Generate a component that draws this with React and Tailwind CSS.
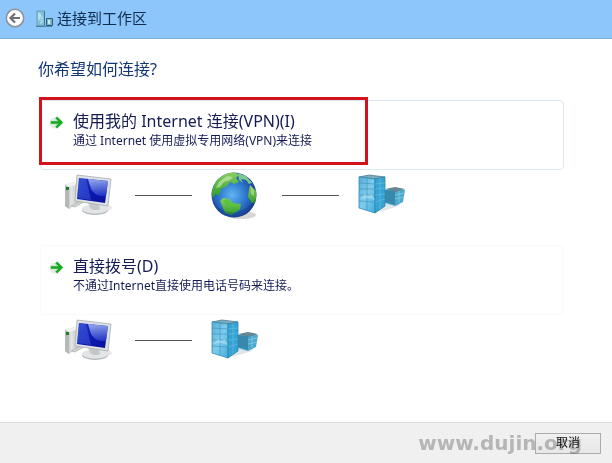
import { useState } from 'react';

function BackIcon() {
  return (
    <svg width="20" height="20" viewBox="0 0 20 20">
      <circle cx="10" cy="10" r="8.7" fill="#fdfdfd" stroke="#8d8f92" strokeWidth="1.5" />
      <path d="M15 10H6M10 5.5L5.5 10l4.5 4.5" fill="none" stroke="#6f6f6f" strokeWidth="2.2" />
    </svg>
  );
}

function WorkplaceIcon() {
  return (
    <svg width="17" height="17" viewBox="0 0 17 17">
      <path d="M1 1h7.500v15H1z" fill="#7fbfd8" stroke="#5b97ae" strokeWidth=".8" />
      <path d="M2 2l3 2v4L2 11z" fill="#b5e3ea" />
      <path d="M5 7l2-2v8l-3 1z" fill="#a3d5e2" />
      <path d="M8.500 1v14" stroke="#3f7690" />
      <path d="M10.500 8.500h6v7h-6z" fill="#7db6c9" stroke="#2f5f74" strokeWidth="1" />
      <path d="M12 10h2v4h-2z" fill="#c9edf2" />
      <path d="M0 16.300h16" stroke="#35637e" strokeWidth=".8" />
    </svg>
  );
}

function ArrowIcon() {
  return (
    <svg width="15" height="15" viewBox="0 0 15 15" className="shrink-0">
      <circle cx="6" cy="8" r="5.5" fill="#e6ebe6" />
      <path d="M1 7.5h11M7 2.5l5 5-5 5" fill="none" stroke="#b4e3b4" strokeWidth="3.6" />
      <path d="M2 7.5h10.5M7.3 2.500l5 5-5 5" fill="none" stroke="#14a824" strokeWidth="2.4" />
    </svg>
  );
}

function ComputerIcon() {
  return (
    <svg width="48" height="44" viewBox="0 0 48 44" className="shrink-0">
      <defs>
        <linearGradient id="screen" x1="0" y1="0" x2="1" y2="1">
          <stop offset="0" stopColor="#2438c8" />
          <stop offset=".5" stopColor="#0d1ab4" />
          <stop offset="1" stopColor="#0a1196" />
        </linearGradient>
        <linearGradient id="glare" x1=".4" y1="0" x2=".5" y2="1">
          <stop offset="0" stopColor="#a9bdf2" />
          <stop offset="1" stopColor="#2238cc" />
        </linearGradient>
        <linearGradient id="metal" x1="0" y1="0" x2="1" y2="0">
          <stop offset="0" stopColor="#9da2a0" />
          <stop offset=".45" stopColor="#e4e6e5" />
          <stop offset="1" stopColor="#bcc0bf" />
        </linearGradient>
      </defs>
      <ellipse cx="36" cy="35" rx="12" ry="4" fill="#e8e8e8" />
      <path d="M1 12l8-3 6 2v19L5 36l-4-3z" fill="url(#metal)" />
      <path d="M1 12l4 2v22l-4-3z" fill="#b4b8b7" />
      <path d="M1 12l8-3 6 2-10 3z" fill="#f1f3f2" />
      <path d="M2 14h3v3H2z" fill="#247a2b" />
      <path d="M7 33l10-5 3 1-9 5z" fill="#d0d3d2" stroke="#a6aaa9" strokeWidth=".6" />
      <ellipse cx="31" cy="37" rx="13" ry="5" fill="#b2b6b8" />
      <ellipse cx="31" cy="36" rx="13" ry="4.700" fill="#e2e5e6" />
      <path d="M24 29l11 2 1 5c-3 2-8 1-10-1z" fill="#c4c8ca" />
      <path d="M13 2l34 4-3 27-33-5z" fill="#dde1e4" stroke="#a7adb1" strokeWidth=".8" />
      <path d="M15 5l29 3-3 22-28-4z" fill="url(#screen)" />
      <path d="M15 5l7 1 5 21-14-2z" fill="#4e70e2" opacity=".4" />
      <path d="M24 6l20 2-2 15c-7 1-12-2-15-7z" fill="url(#glare)" opacity=".85" />
    </svg>
  );
}

function GlobeIcon() {
  return (
    <svg width="48" height="50" viewBox="0 0 48 50" className="shrink-0">
      <defs>
        <radialGradient id="ocean" cx=".46" cy=".5" r=".57">
          <stop offset="0" stopColor="#62b4f0" />
          <stop offset=".5" stopColor="#2f7bd0" />
          <stop offset="1" stopColor="#17388f" />
        </radialGradient>
        <linearGradient id="land" x1="0" y1="0" x2="0" y2="1">
          <stop offset="0" stopColor="#8fd066" />
          <stop offset="1" stopColor="#2c9b28" />
        </linearGradient>
        <clipPath id="globe"><circle cx="23" cy="25" r="22.5" /></clipPath>
      </defs>
      <ellipse cx="30" cy="45" rx="15" ry="4" fill="#d8d5d2" />
      <circle cx="23" cy="25" r="22.5" fill="url(#ocean)" />
      <g clipPath="url(#globe)">
        <path d="M0 24l5-14 9-8 9-1 5 4-3 3 3 4-5 2-4-2-3 4-6 3-2 6-4-1-1 4z" fill="url(#land)" />
        <path d="M8 12l8-6 6 1-3 3-6 2-4 5-4 1z" fill="#dcf2c0" opacity=".55" />
        <path d="M27 3l8 3 6 7-3 1-3-4-5-1 2 4-4-3z" fill="#7cc88a" />
        <path d="M39 15l6 6v13l-4-1-4-6 1-7z" fill="url(#land)" />
        <path d="M40 17l3 3v6l-3-2z" fill="#b6e58f" opacity=".6" />
        <path d="M9 31l3-3 6 1 4 4 8 1-1 5-5 4-4 2-6-2-2-5z" fill="url(#land)" />
        <path d="M12 30l5-1 5 5 5 1-5 2-7-2z" fill="#58c43d" />
        <path d="M1 28c5 15 29 23 44 0-1 13-12 20-23 20S2 40 1 28z" fill="#0c2b74" opacity=".25" />
      </g>
    </svg>
  );
}

function ServerIcon() {
  return (
    <svg width="50" height="42" viewBox="0 0 50 42" className="shrink-0">
      <defs>
        <linearGradient id="glass" x1="0" y1="0" x2="1" y2="1">
          <stop offset="0" stopColor="#58aed6" />
          <stop offset=".5" stopColor="#7fcbee" />
          <stop offset="1" stopColor="#45aedb" />
        </linearGradient>
      </defs>
      <path d="M22 38l20-6 6-14-18-2z" fill="#dfe6e9" />
      <path d="M28 16l10-2 10 2-2 12-8 4-10-3z" fill="#4ba9ce" />
      <path d="M28 15l10-2 10 2-9 3z" fill="#668694" />
      <path d="M28 16l10 1v14l-10-3z" fill="#3888ae" />
      <path d="M38 21l9-2M38 25l9-2M42 17v12" stroke="#90d0e7" strokeWidth=".7" />
      <path d="M2 3l10-2 16 2-10 2z" fill="#7badc1" stroke="#4f7c90" strokeWidth=".8" />
      <path d="M2 3l16 2v34L2 34z" fill="url(#glass)" stroke="#348baf" strokeWidth=".8" />
      <path d="M18 5l10-2v29l-10 7z" fill="#35a3d4" stroke="#2b83a8" strokeWidth=".8" />
      <path d="M10 4v32M2 9l16 1M2 15h16M2 21h16M2 27l16 1" stroke="#3a92b9" strokeWidth=".6" fill="none" />
      <path d="M18 10l10-1M18 15l10-1M18 21l10-1M18 28l10-3M23 4v31" stroke="#6cc2e4" strokeWidth=".6" fill="none" />
      <path d="M3 25l5-5 3 2 4-2 3 6-7-2z" fill="#b7e6f5" opacity=".5" />
    </svg>
  );
}

function Line() {
  return <div className="h-px w-[57px] shrink-0 bg-[#555]" />;
}

function Option({ title, detail, className, onClick }) {
  return (
    <button onClick={onClick} className={`flex w-full items-start rounded-sm border pt-2 pb-5 pl-2 text-left text-[#151c55] ${className}`}>
      <span className="pt-1.5"><ArrowIcon /></span>
      <span className="ml-[9px] block">
        <span className="block text-base leading-6">{title}</span>
        <span className="block text-xs leading-4">{detail}</span>
      </span>
    </button>
  );
}

export default function App() {
  const [choice, setChoice] = useState('vpn');

  return (
    <div className="flex min-h-screen flex-col bg-white font-['Noto_Sans','Noto_Sans_CJK_SC',sans-serif]">
      <header className="flex h-[39px] items-center border-b border-[#80acd3] bg-[#8dc6fb] pb-0.5 pl-[5px]">
        <button aria-label="返回"><BackIcon /></button>
        <span className="ml-[11px]"><WorkplaceIcon /></span>
        <h1 className="ml-1 text-[15px] leading-5 text-[#102d50]">连接到工作区</h1>
      </header>

      <main className="flex-1 pt-[18px] pr-12 pl-10">
        <h2 className="-ml-0.5 text-base leading-6 text-[#123576]">你希望如何连接?</h2>

        <section className="relative mt-[19px]">
          <Option
            title="使用我的 Internet 连接(VPN)(I)"
            detail="通过 Internet 使用虚拟专用网络(VPN)来连接"
            className="border-[#d8eaef]"
            onClick={() => setChoice('vpn')}
          />
          {choice === 'vpn' && (
            <div className="pointer-events-none absolute -top-[3px] -left-px h-[68px] w-[329px] border-3 border-[#d3121b]" />
          )}
        </section>
        <div className="flex h-[50px] items-center pl-6">
          <ComputerIcon />
          <div className="ml-[23px]"><Line /></div>
          <div className="ml-[19px]"><GlobeIcon /></div>
          <div className="ml-[23px]"><Line /></div>
          <div className="ml-[18px]"><ServerIcon /></div>
        </div>

        <section className="mt-[25px]">
          <Option
            title="直接拨号(D)"
            detail="不通过Internet直接使用电话号码来连接。"
            className="border-[#fafafa]"
            onClick={() => setChoice('dial')}
          />
        </section>
        <div className="flex h-[50px] items-center pl-6">
          <ComputerIcon />
          <div className="ml-[23px]"><Line /></div>
          <div className="ml-[18px]"><ServerIcon /></div>
        </div>
      </main>

      <footer className="relative flex h-[41px] items-center justify-end border-t border-[#dcdcdc] bg-[#f0f0f0] pr-[11px]">
        <button className="h-[21px] w-[66px] border border-[#acacac] bg-linear-to-b from-[#f1f1f1] to-[#e7e7e7] text-xs leading-4 text-[#111]">取消</button>
        <span className="pointer-events-none absolute right-[30px] font-['DejaVu_Sans'] text-xl leading-6 font-bold text-[#c2c2c2] mix-blend-multiply">www.dujin.org</span>
      </footer>
    </div>
  );
}
